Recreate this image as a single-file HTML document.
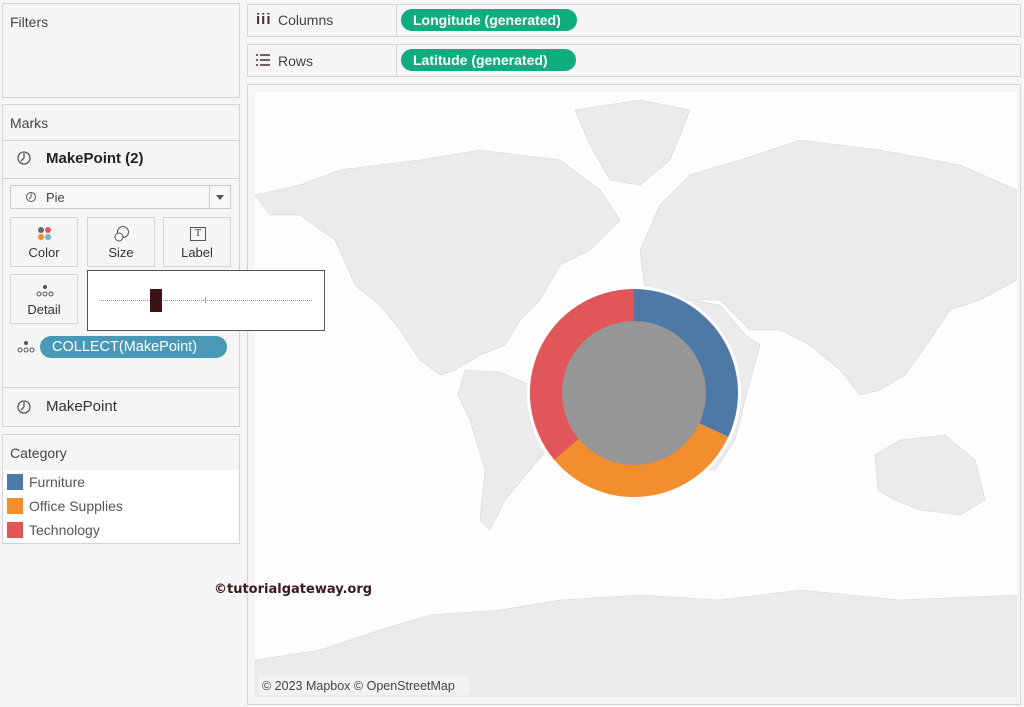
<!DOCTYPE html>
<html><head><style>
body{margin:0;width:1024px;height:707px;background:#f5f5f5;font-family:"Liberation Sans",sans-serif;position:relative;overflow:hidden;color:#333}
.box{position:absolute;background:#f5f5f5;border:1px solid #d4d4d4;box-sizing:border-box}
.t{position:absolute;font-size:14px;color:#444}
.pill{position:absolute;background:#0fad7e;color:#fff;border-radius:11px;font-size:14px;font-weight:bold;height:22px;line-height:22px;padding:0 12px;box-sizing:border-box;white-space:nowrap}
.btn{position:absolute;width:68px;height:50px;border:1px solid #d4d4d4;box-sizing:border-box;background:#f5f5f5;font-size:13px;color:#333;text-align:center}
.btn span{position:absolute;bottom:6px;left:0;right:0}
</style></head><body>
<div class="box" style="left:2px;top:3px;width:238px;height:95px"></div>
<div class="t" style="left:10px;top:14px">Filters</div>

<div class="box" style="left:2px;top:104px;width:238px;height:323px"></div>
<div class="t" style="left:10px;top:115px">Marks</div>
<div style="position:absolute;left:3px;top:140px;width:236px;border-top:1px solid #d4d4d4"></div>
<div style="position:absolute;left:3px;top:178px;width:236px;border-top:1px solid #d4d4d4"></div>
<svg style="position:absolute;left:16px;top:150px" width="16" height="16"><circle cx="8" cy="8" r="6" fill="none" stroke="#555" stroke-width="1.3"/><path d="M8 8V3M8 8L5 11" stroke="#555" stroke-width="1.3"/></svg>
<div style="position:absolute;left:46px;top:150px;font-size:15px;font-weight:bold;color:#222">MakePoint (2)</div>
<div style="position:absolute;left:10px;top:185px;width:221px;height:24px;border:1px solid #ccc;box-sizing:border-box;background:#f7f7f7"></div>
<div style="position:absolute;left:209px;top:186px;height:22px;border-left:1px solid #ccc"></div>
<div style="position:absolute;left:216px;top:195px;border:4px solid transparent;border-top:5px solid #555"></div>
<svg style="position:absolute;left:25px;top:191px" width="12" height="12"><circle cx="6" cy="6" r="4.5" fill="none" stroke="#555"/><path d="M6 6V2.5M6 6L4 8" stroke="#555"/></svg>
<div style="position:absolute;left:46px;top:190px;font-size:13px;color:#444">Pie</div>
<div class="btn" style="left:10px;top:217px"><svg style="position:absolute;left:26px;top:8px" width="16" height="16"><circle cx="4" cy="4" r="3" fill="#666"/><circle cx="11" cy="4" r="3" fill="#e15759"/><circle cx="4" cy="11" r="3" fill="#f28e2b"/><circle cx="11" cy="11" r="3" fill="#76b7b2"/></svg><span>Color</span></div>
<div class="btn" style="left:87px;top:217px"><svg style="position:absolute;left:25px;top:7px" width="18" height="18"><circle cx="10" cy="7" r="5.5" fill="none" stroke="#555"/><circle cx="6" cy="12" r="4" fill="#f5f5f5" stroke="#555"/></svg><span>Size</span></div>
<div class="btn" style="left:163px;top:217px"><div style="position:absolute;left:26px;top:9px;width:14px;height:12px;border:1px solid #555;font-size:10px;line-height:12px;font-family:'Liberation Serif',serif">T</div><span>Label</span></div>
<div class="btn" style="left:10px;top:274px"><svg style="position:absolute;left:24px;top:9px" width="20" height="14"><circle cx="10" cy="3" r="2" fill="#555"/><circle cx="4" cy="10" r="2" fill="none" stroke="#555"/><circle cx="10" cy="10" r="2" fill="none" stroke="#555"/><circle cx="16" cy="10" r="2" fill="none" stroke="#555"/></svg><span>Detail</span></div>
<svg style="position:absolute;left:16px;top:340px" width="20" height="14"><circle cx="10" cy="3" r="2" fill="#555"/><circle cx="4" cy="10" r="2" fill="none" stroke="#555"/><circle cx="10" cy="10" r="2" fill="none" stroke="#555"/><circle cx="16" cy="10" r="2" fill="none" stroke="#555"/></svg>
<div class="pill" style="left:40px;top:336px;background:#4a98b7;font-weight:normal;width:187px;font-size:14.5px">COLLECT(MakePoint)</div>
<div style="position:absolute;left:3px;top:387px;width:236px;border-top:1px solid #d4d4d4"></div>
<svg style="position:absolute;left:16px;top:399px" width="16" height="16"><circle cx="8" cy="8" r="6" fill="none" stroke="#555" stroke-width="1.3"/><path d="M8 8V3M8 8L5 11" stroke="#555" stroke-width="1.3"/></svg>
<div style="position:absolute;left:46px;top:398px;font-size:15px;color:#333">MakePoint</div>

<div class="box" style="left:2px;top:434px;width:238px;height:110px"></div>
<div style="position:absolute;left:3px;top:470px;width:236px;height:73px;background:#fff"></div>
<div class="t" style="left:10px;top:445px">Category</div>
<div style="position:absolute;left:7px;top:474px;width:16px;height:16px;background:#4e79a7"></div>
<div style="position:absolute;left:7px;top:498px;width:16px;height:16px;background:#f28e2b"></div>
<div style="position:absolute;left:7px;top:522px;width:16px;height:16px;background:#e15759"></div>
<div class="t" style="left:29px;top:474px;color:#555">Furniture</div>
<div class="t" style="left:29px;top:498px;color:#555">Office Supplies</div>
<div class="t" style="left:29px;top:522px;color:#555">Technology</div>

<div class="box" style="left:247px;top:4px;width:774px;height:33px"></div>
<div style="position:absolute;left:396px;top:5px;height:31px;border-left:1px solid #d4d4d4"></div>
<div style="position:absolute;left:256px;top:11px;font-size:15px;font-weight:bold;color:#4a3030;letter-spacing:1px">iii</div>
<div class="t" style="left:278px;top:12px">Columns</div>
<div class="pill" style="left:401px;top:9px;width:176px">Longitude (generated)</div>
<div class="box" style="left:247px;top:44px;width:774px;height:33px"></div>
<div style="position:absolute;left:396px;top:45px;height:31px;border-left:1px solid #d4d4d4"></div>
<svg style="position:absolute;left:256px;top:54px" width="14" height="12"><path d="M0 1h2M4 1h10M0 6h2M4 6h10M0 11h2M4 11h10" stroke="#4a3030" stroke-width="1.6"/></svg>
<div class="t" style="left:278px;top:53px">Rows</div>
<div class="pill" style="left:401px;top:49px;width:175px">Latitude (generated)</div>

<div class="box" style="left:247px;top:84px;width:774px;height:621px;background:#f5f5f5"></div>
<svg style="position:absolute;left:255px;top:92px" width="762" height="605" viewBox="255 92 762 605">
<rect x="255" y="92" width="762" height="605" fill="#fdfdfd"/>
<g fill="#ebebeb" stroke="#d6d6d6" stroke-width="0.6">
<path d="M255 195L300 185L340 170L420 160L480 150L560 160L600 190L620 220L590 250L560 265L540 300L520 320L505 345L480 355L455 370L440 375L420 360L400 330L380 305L355 285L335 240L300 215L270 215Z"/>
<path d="M575 110L640 100L690 110L670 160L640 185L610 180L590 145Z"/>
<path d="M465 370L500 372L530 385L560 410L555 440L530 470L505 500L490 530L480 520L485 470L470 420L458 395Z"/>
<path d="M640 250L660 205L690 175L740 160L800 140L880 150L960 165L1017 190L1017 280L980 300L950 310L930 340L905 375L880 390L860 395L840 370L810 345L780 330L750 330L720 300L690 300L660 300L645 290Z"/>
<path d="M640 300L690 300L720 305L745 335L760 345L745 400L735 440L715 470L695 470L680 430L660 400L640 385L625 365L625 330Z"/>
<path d="M875 455L900 440L945 435L975 460L985 500L960 515L920 510L895 500L878 490Z"/>
<path d="M255 660L320 650L380 630L430 615L500 610L560 600L640 595L720 600L800 590L900 600L1017 595L1017 697L255 697Z"/>
</g>
<circle cx="634" cy="393" r="107" fill="#fff"/>
<path d="M634 393L634 289A104 104 0 0 1 728.3 436.9Z" fill="#4e79a7"/>
<path d="M634 393L728.3 436.9A104 104 0 0 1 554.3 459.9Z" fill="#f28e2b"/>
<path d="M634 393L554.3 459.9A104 104 0 0 1 634 289Z" fill="#e15759"/>
<circle cx="634" cy="393" r="72" fill="#969696"/>
<rect x="258" y="676" width="211" height="19" fill="#f2f2f2"/>
<text x="262" y="690" font-family="Liberation Sans" font-size="12.5" fill="#444">© 2023 Mapbox © OpenStreetMap</text>
</svg>
<div style="position:absolute;left:214px;top:582px;font-size:13px;font-weight:bold;color:#3a1a1a;font-family:'DejaVu Sans',sans-serif">©tutorialgateway.org</div>

<div style="position:absolute;left:87px;top:270px;width:238px;height:61px;background:#fff;border:1px solid #555;box-sizing:border-box"></div>
<div style="position:absolute;left:99px;top:300px;width:213px;border-top:1px dotted #999"></div>
<div style="position:absolute;left:205px;top:297px;height:6px;border-left:1px solid #999"></div>
<div style="position:absolute;left:150px;top:289px;width:12px;height:23px;background:#3a1418"></div>
</body></html>
